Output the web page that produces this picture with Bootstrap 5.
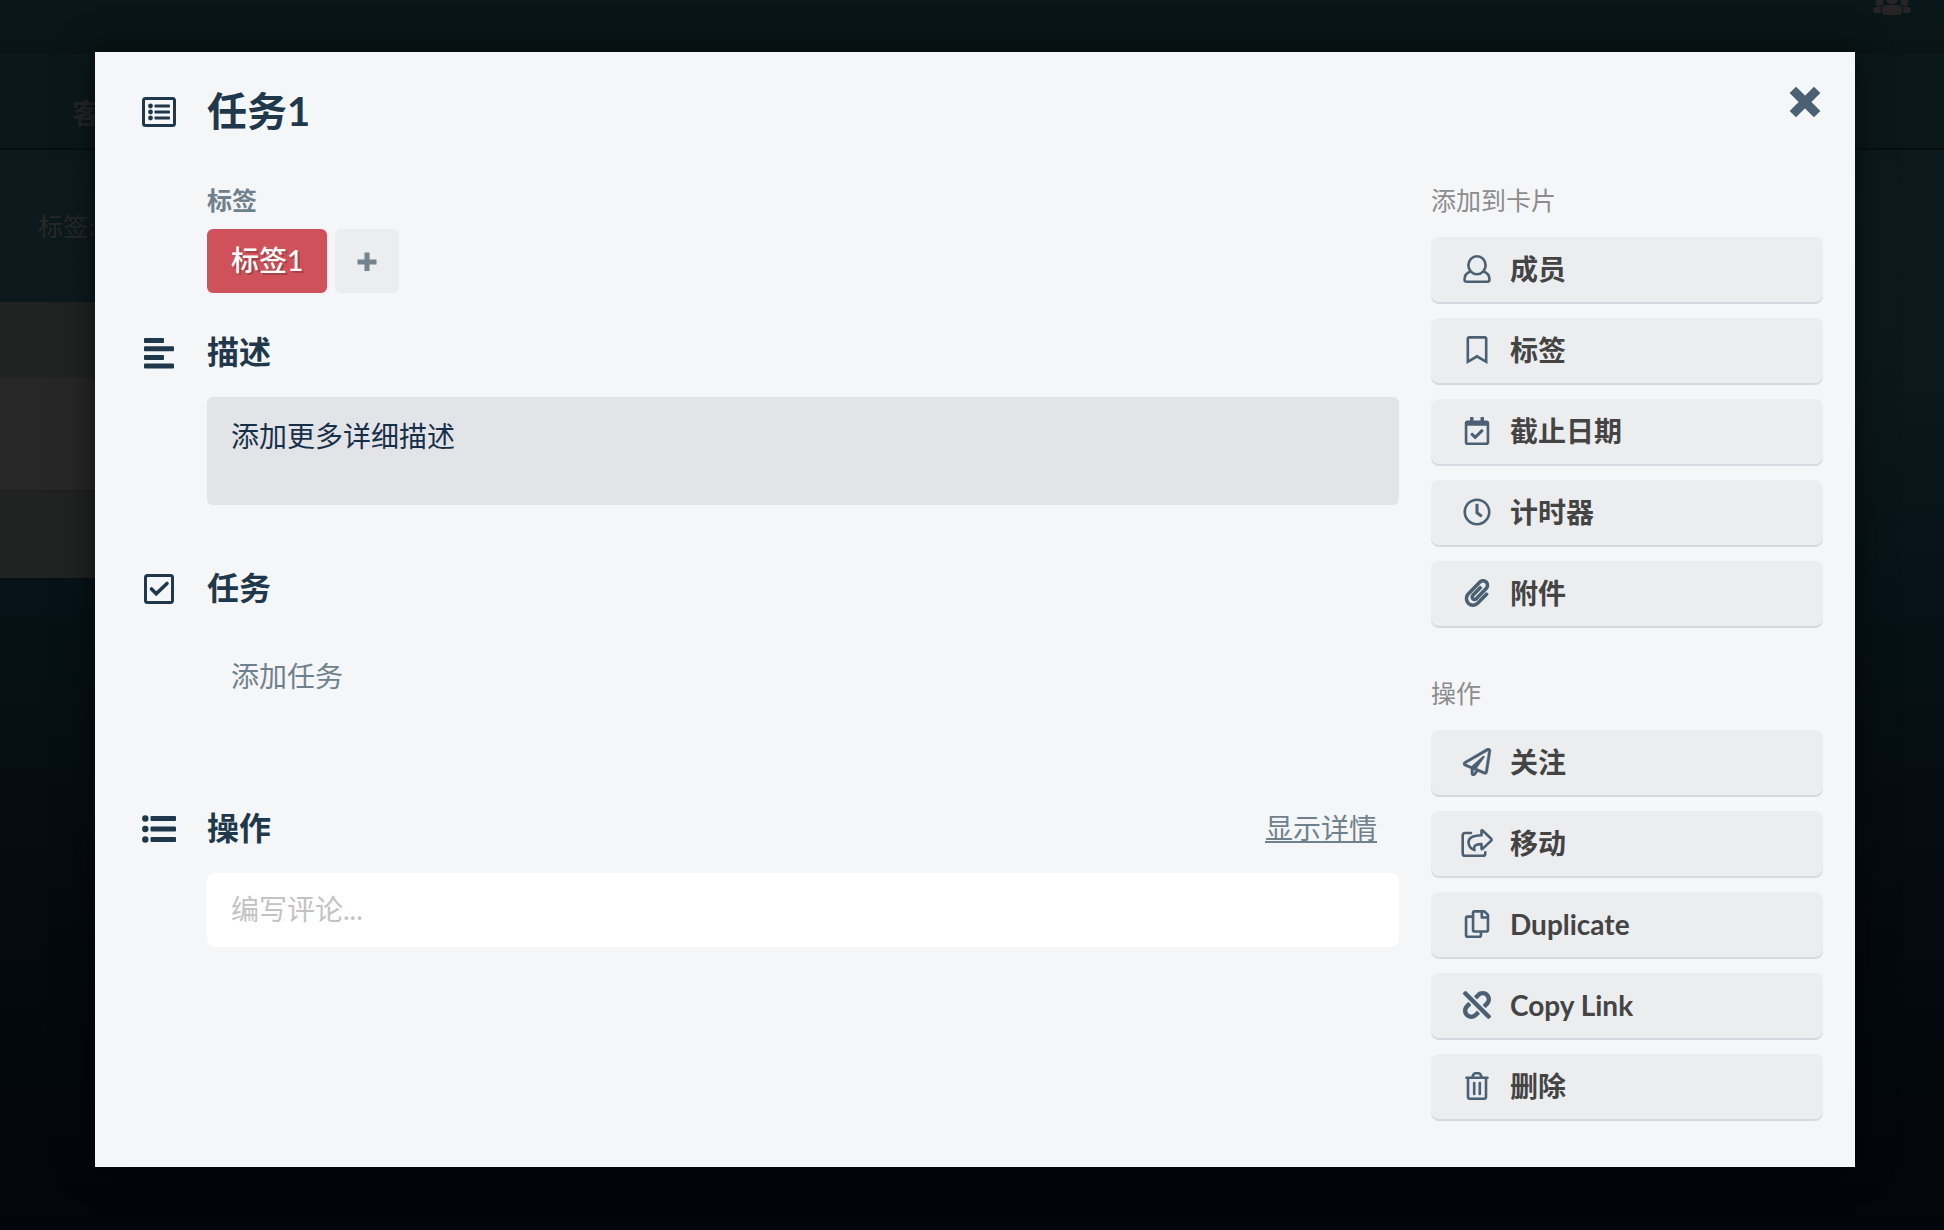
<!DOCTYPE html>
<html lang="zh-CN">
<head>
<meta charset="utf-8">
<meta name="viewport" content="width=device-width, initial-scale=1">
<title>任务1</title>
<link href="https://cdn.jsdelivr.net/npm/bootstrap@5.3.0/dist/css/bootstrap.min.css" rel="stylesheet">
<style>
body { font-family: Lato, "Noto Sans CJK SC", sans-serif; font-size: 28px; line-height: 40px; min-height: 100vh; background: #03070b; }
button, textarea { font-family: inherit; }
.board { min-height: 100vh; background: linear-gradient(#08161a 0, #0c1a1e 200px, #0b191d 350px, #061217 600px, #040a10 900px, #02060a 1230px); }
.topbar { height: 54px; background: linear-gradient(#081719, #0a1415); color: #262424; padding-right: 32px; }
.topbar svg { width: 40px; height: 30px; margin-top: -14px; }
.projectbar { height: 96px; border-bottom: 2px solid #061012; background: #0b181a; color: #222526; padding: 0 72px; }
.filterbar { height: 152px; padding-left: 38px; font-size: 25px; color: #2a2827; }
.lane { width: 360px; background: #212322; padding: 76px 0 86px; }
.lane-item { height: 114px; background: #272727; border-bottom: 2px solid #1f1f1f; }
.overlay { inset: 0; padding: 52px 89px 63px 95px; }
.sheet { background: #f5f6f8; box-shadow: 0 0 32px rgba(0,0,0,.6); padding: 31px 0 48px; color: #1f384c; }
.closer { top: 26px; right: 26px; padding: 5px; border: 0; background: none; color: #4b6072; line-height: 0; }
.glyph { width: 34px; height: 34px; margin: 0 31px 0 47px; flex: none; }
.title-line { line-height: 56px; margin-bottom: 45px; }
.title-text { font-size: 40px; line-height: 56px; }
.section-line { font-size: 32px; line-height: 40px; }
.indent { padding: 0 16px 0 112px; }
.caption { font-size: 25px; line-height: 32px; color: #8c8c8c; }
.caption-strong { color: #6f818d; font-weight: 700; margin-bottom: 13px; }
.tag { height: 64px; border: 0; border-radius: 6px; background: #cf5159; color: #fff; padding: 0 24px 2px; font-weight: 500; text-shadow: 2px 2px 0 rgba(0,0,0,.2); }
.tag-add { width: 64px; height: 64px; border: 0; border-radius: 6px; background: #ecedef; color: #74848f; }
.tags { margin-bottom: 39px; }
.desc { min-height: 108px; border: 0; border-radius: 6px; background: #e3e4e7; color: #17304a; padding: 19px 24px 49px; margin: 25px 0 63px; }
.add-task { border: 0; background: none; color: #6f818d; padding: 0 24px; margin: 48px 0 112px; }
.details { color: #6f818d; padding-right: 38px; font-size: 28px; }
.details a { color: inherit; }
.comment { height: 74px; border: 0; border-radius: 8px; background: #fff; padding: 16px 24px; margin-top: 25px; resize: none; color: #333; }
.comment::placeholder { color: #c3c3c3; opacity: 1; }
.side { padding: 0 32px 0 16px; }
.side .caption { margin-bottom: 21px; }
.actions { gap: 16px; }
.actions + .caption { margin-top: 51px; }
.act { height: 65px; border: 0; border-radius: 8px; background: #ecedef; box-shadow: 0 2px 0 #d7d9e0; color: #444; font-weight: 700; padding: 0 30px 2px; gap: 17px; }
.act svg { width: 32px; height: 28px; color: #4b6072; flex: none; }
</style>
<script src="https://cdn.jsdelivr.net/npm/bootstrap@5.3.0/dist/js/bootstrap.bundle.min.js"></script>
</head>
<body>
<div class="board">
  <header class="topbar d-flex justify-content-end align-items-start overflow-hidden">
    <svg viewBox="0 0 40 30" fill="currentColor" aria-hidden="true"><circle cx="20" cy="12" r="6.500"/><circle cx="7.500" cy="16" r="4"/><circle cx="32.500" cy="16" r="4"/><path d="M14 19h12q4 0 4 4v3q0 3-3 3H13q-3 0-3-3v-3q0-4 4-4zM4 21h5v6H3q-2 0-2-2v-1q0-3 3-3zM36 21h-5v6h6q2 0 2-2v-1q0-3-3-3z"/></svg>
  </header>
  <div class="projectbar d-flex align-items-center pb-0"><span class="fw-bold mt-4">客户</span></div>
  <div class="filterbar d-flex align-items-center">标签:</div>
  <div class="lane"><div class="lane-item"></div></div>
</div>

<div class="overlay position-absolute">
  <main class="sheet position-relative">
    <button class="closer position-absolute" type="button" aria-label="关闭"><svg width="38" height="38" viewBox="0 0 38 38" aria-hidden="true"><path d="M10 10l18 18M28 10L10 28" stroke="currentColor" stroke-width="9" stroke-linecap="square" stroke-linejoin="round"/></svg></button>
    <div class="title-line d-flex align-items-center">
      <svg class="glyph" viewBox="0 0 34 34" fill="currentColor" aria-hidden="true"><rect x="1.500" y="4.500" width="31" height="27" rx="2" fill="none" stroke="currentColor" stroke-width="3"/><circle cx="8.500" cy="12" r="2.400"/><circle cx="8.500" cy="18" r="2.400"/><circle cx="8.500" cy="24" r="2.400"/><rect x="12.500" y="10.500" width="15.500" height="3" rx=".8"/><rect x="12.500" y="16.500" width="15.500" height="3" rx=".8"/><rect x="12.500" y="22.500" width="15.500" height="3" rx=".8"/></svg>
      <h1 class="title-text m-0 fw-bold">任务1</h1>
    </div>
    <div class="row g-0">
      <div class="col-9">
        <div class="indent">
          <div class="caption caption-strong">标签</div>
          <div class="tags d-flex gap-2">
            <button class="tag" type="button">标签1</button>
            <button class="tag-add d-flex align-items-center justify-content-center" type="button" aria-label="添加标签"><svg width="20" height="20" viewBox="0 0 20 20" aria-hidden="true"><path d="M10 4v14M3 11h14" stroke="currentColor" stroke-width="5" stroke-linecap="square"/></svg></button>
          </div>
        </div>
        <section>
          <div class="section-line d-flex align-items-center">
            <svg class="glyph" viewBox="0 0 34 34" fill="currentColor" aria-hidden="true"><rect x="2" y="3" width="20" height="5" rx="1"/><rect x="2" y="11.300" width="30" height="5" rx="1"/><rect x="2" y="20" width="20" height="5" rx="1"/><rect x="2" y="28.500" width="30" height="5" rx="1"/></svg>
            <h2 class="section-line fw-bold m-0">描述</h2>
          </div>
          <div class="indent"><button class="desc d-block w-100 text-start" type="button">添加更多详细描述</button></div>
        </section>
        <section>
          <div class="section-line d-flex align-items-center">
            <svg class="glyph" viewBox="0 0 34 34" fill="none" stroke="currentColor" stroke-width="3" aria-hidden="true"><rect x="3.500" y="4.500" width="27" height="27" rx="2"/><path d="M9.500 18l4.700 4.700L25 12.500" stroke-width="3.600" stroke-linecap="round"/></svg>
            <h2 class="section-line fw-bold m-0">任务</h2>
          </div>
          <div class="indent"><button class="add-task d-block" type="button">添加任务</button></div>
        </section>
        <section>
          <div class="section-line d-flex align-items-center">
            <svg class="glyph" viewBox="0 0 34 34" fill="currentColor" aria-hidden="true"><circle cx="3.300" cy="7.500" r="3.200"/><circle cx="3.300" cy="18" r="3.200"/><circle cx="3.300" cy="28.500" r="3.200"/><rect x="8.500" y="5" width="25.500" height="5" rx="1"/><rect x="8.500" y="15.500" width="25.500" height="5" rx="1"/><rect x="8.500" y="26" width="25.500" height="5" rx="1"/></svg>
            <h2 class="section-line fw-bold m-0">操作</h2>
            <span class="details ms-auto"><a href="#">显示详情</a></span>
          </div>
          <div class="indent"><textarea class="comment d-block w-100" rows="1" aria-label="编写评论" placeholder="编写评论..."></textarea></div>
        </section>
      </div>
      <aside class="col-3 side">
        <div class="caption">添加到卡片</div>
        <div class="actions d-grid">
          <button class="act d-flex align-items-center" type="button"><svg viewBox="0 0 28 28" fill="none" stroke="currentColor" stroke-width="2.600" stroke-linejoin="round" aria-hidden="true"><ellipse cx="14" cy="10.300" rx="8.600" ry="9"/><path d="M7.500 16.500Q1.500 18.500 1.500 24.500q0 2.200 2.400 2.200h20.200q2.400 0 2.400-2.200 0-6-6-8"/></svg>成员</button>
          <button class="act d-flex align-items-center" type="button"><svg viewBox="0 0 384 512" fill="currentColor" aria-hidden="true"><path d="M336 0H48C21.490 0 0 21.490 0 48v464l192-112 192 112V48c0-26.510-21.490-48-48-48zm0 428.430l-144-84-144 84V54a6 6 0 0 1 6-6h276c3.314 0 6 2.683 6 5.996V428.430z"/></svg>标签</button>
          <button class="act d-flex align-items-center" type="button"><svg viewBox="0 0 448 512" fill="currentColor" aria-hidden="true"><path d="M400 64h-48V12c0-6.627-5.373-12-12-12h-40c-6.627 0-12 5.373-12 12v52H160V12c0-6.627-5.373-12-12-12h-40c-6.627 0-12 5.373-12 12v52H48C21.490 64 0 85.490 0 112v352c0 26.510 21.490 48 48 48h352c26.510 0 48-21.490 48-48V112c0-26.510-21.490-48-48-48zm-6 400H54a6 6 0 0 1-6-6V160h352v298a6 6 0 0 1-6 6zm-52.849-200.650L198.842 404.519c-4.705 4.667-12.303 4.637-16.971-.068l-75.091-75.699c-4.667-4.705-4.637-12.303.068-16.971l22.719-22.536c4.705-4.667 12.303-4.637 16.970.069l44.104 44.461 111.072-110.181c4.705-4.667 12.303-4.637 16.971.068l22.536 22.718c4.667 4.705 4.636 12.303-.069 16.970z"/></svg>截止日期</button>
          <button class="act d-flex align-items-center" type="button"><svg viewBox="0 0 512 512" fill="currentColor" aria-hidden="true"><path d="M256 8C119 8 8 119 8 256s111 248 248 248 248-111 248-248S393 8 256 8zm0 448c-110.500 0-200-89.500-200-200S145.500 56 256 56s200 89.500 200 200-89.500 200-200 200zm61.800-104.400l-84.900-61.700c-3.100-2.300-4.900-5.900-4.900-9.700V116c0-6.600 5.400-12 12-12h32c6.600 0 12 5.400 12 12v141.700l66.800 48.600c5.400 3.900 6.500 11.400 2.600 16.800L334.600 349c-3.900 5.300-11.400 6.500-16.800 2.600z"/></svg>计时器</button>
          <button class="act d-flex align-items-center" type="button"><svg viewBox="0 0 448 512" fill="currentColor" aria-hidden="true"><path d="M43.246 466.142c-58.430-60.289-57.341-157.511 1.386-217.581L254.392 34c44.316-45.332 116.351-45.336 160.671 0 43.890 44.894 43.943 117.329 0 162.276L232.214 383.128c-29.855 30.537-78.633 30.111-107.982-.998-28.275-29.970-27.368-77.473 1.452-106.953l143.743-146.835c6.182-6.314 16.312-6.422 22.626-.241l22.861 22.379c6.315 6.182 6.422 16.312.241 22.626L171.427 319.927c-4.932 5.045-5.236 13.428-.648 18.292 4.372 4.634 11.245 4.711 15.688.165l182.849-186.851c19.613-20.062 19.613-52.725-.011-72.798-19.189-19.627-49.957-19.637-69.154 0L90.390 293.295c-34.763 35.560-35.299 93.120-1.191 128.313 34.010 35.093 88.985 35.137 123.058.286l172.060-175.999c6.177-6.319 16.307-6.433 22.626-.256l22.877 22.364c6.319 6.177 6.434 16.307.256 22.626l-172.060 175.998c-59.576 60.938-155.943 60.216-214.770-.485z"/></svg>附件</button>
        </div>
        <div class="caption">操作</div>
        <div class="actions d-grid">
          <button class="act d-flex align-items-center" type="button"><svg viewBox="0 0 512 512" fill="currentColor" stroke="currentColor" stroke-width="6" aria-hidden="true"><path d="M440 6.500L24 246.400c-34.400 19.900-31.100 70.800 5.700 85.900L144 379.600V464c0 46.400 59.200 65.500 86.600 28.600l43.800-59.100 111.900 46.200c5.900 2.400 12.100 3.600 18.300 3.600 8.200 0 16.300-2.100 23.600-6.200 12.800-7.200 21.600-20 23.900-34.500l59.400-387.200c6.100-40.100-36.900-68.800-71.500-48.900zM192 464v-64.600l36.600 15.100L192 464zm212.600-28.700l-153.800-63.500L391 169.500c10.700-15.500-9.500-33.500-23.700-21.200L155.800 332.600 48 288 464 48l-59.400 387.300z"/></svg>关注</button>
          <button class="act d-flex align-items-center" type="button"><svg viewBox="0 0 32 28" fill="none" stroke="currentColor" stroke-width="2.600" stroke-linejoin="round" stroke-linecap="round" aria-hidden="true"><path d="M10 4H4Q1.700 4 1.700 6.300v18.100q0 2.300 2.300 2.300h18q2.300 0 2.300-2.300v-1"/><path d="M20.500 1.800q0-1 1-.3l8.700 8.300q.8.900 0 1.800l-8.700 8.300q-1 .7-1-.3v-4.500q-9-.2-7 6-6-2-6-8 0-6.500 13-6.800z"/></svg>移动</button>
          <button class="act d-flex align-items-center" type="button"><svg viewBox="0 0 448 512" fill="currentColor" aria-hidden="true"><path d="M433.941 65.941l-51.882-51.882A48 48 0 0 0 348.118 0H176c-26.510 0-48 21.490-48 48v48H48c-26.510 0-48 21.490-48 48v320c0 26.510 21.490 48 48 48h224c26.510 0 48-21.490 48-48v-48h80c26.510 0 48-21.490 48-48V99.882a48 48 0 0 0-14.059-33.941zM266 464H54a6 6 0 0 1-6-6V150a6 6 0 0 1 6-6h74v224c0 26.510 21.490 48 48 48h96v42a6 6 0 0 1-6 6zm128-96H182a6 6 0 0 1-6-6V54a6 6 0 0 1 6-6h106v88c0 13.255 10.745 24 24 24h88v202a6 6 0 0 1-6 6zm6-256h-64V48h9.632c1.591 0 3.117.632 4.243 1.757l48.368 48.368a6 6 0 0 1 1.757 4.243V112z"/></svg>Duplicate</button>
          <button class="act d-flex align-items-center" type="button"><svg viewBox="0 0 512 512" fill="currentColor" aria-hidden="true"><path d="M304.083 405.907c4.686 4.686 4.686 12.284 0 16.971l-44.674 44.674c-59.263 59.262-155.693 59.266-214.961 0-59.264-59.265-59.264-155.696 0-214.960l44.675-44.675c4.686-4.686 12.284-4.686 16.971 0l39.598 39.598c4.686 4.686 4.686 12.284 0 16.971l-44.675 44.674c-28.072 28.073-28.072 73.750 0 101.823 28.072 28.072 73.750 28.073 101.824 0l44.674-44.674c4.686-4.686 12.284-4.686 16.971 0l39.597 39.598zm-56.568-260.216c4.686 4.686 12.284 4.686 16.971 0l44.674-44.674c28.072-28.075 73.750-28.073 101.824 0 28.072 28.073 28.072 73.750 0 101.823l-44.675 44.674c-4.686 4.686-4.686 12.284 0 16.971l39.598 39.598c4.686 4.686 12.284 4.686 16.971 0l44.675-44.675c59.265-59.265 59.265-155.695 0-214.961-59.266-59.264-155.695-59.264-214.961 0l-44.674 44.674c-4.686 4.686-4.686 12.284 0 16.971l39.597 39.599zm234.828 359.280l22.627-22.627c9.373-9.373 9.373-24.569 0-33.941L63.598 7.029c-9.373-9.373-24.569-9.373-33.941 0L7.029 29.657c-9.373 9.373-9.373 24.569 0 33.941l441.373 441.373c9.373 9.372 24.569 9.372 33.941 0z"/></svg>Copy Link</button>
          <button class="act d-flex align-items-center" type="button"><svg viewBox="0 0 24 28" fill="none" stroke="currentColor" stroke-width="2.600" stroke-linejoin="round" stroke-linecap="round" aria-hidden="true"><path d="M1.500 5.800h21M3 6v18.700q0 2 2 2h14q2 0 2-2V6M7 5.500l1.600-3.200q.5-1 1.600-1h3.600q1.100 0 1.600 1L17 5.500M9.200 11v11M14.800 11v11"/></svg>删除</button>
        </div>
      </aside>
    </div>
  </main>
</div>
</body>
</html>
